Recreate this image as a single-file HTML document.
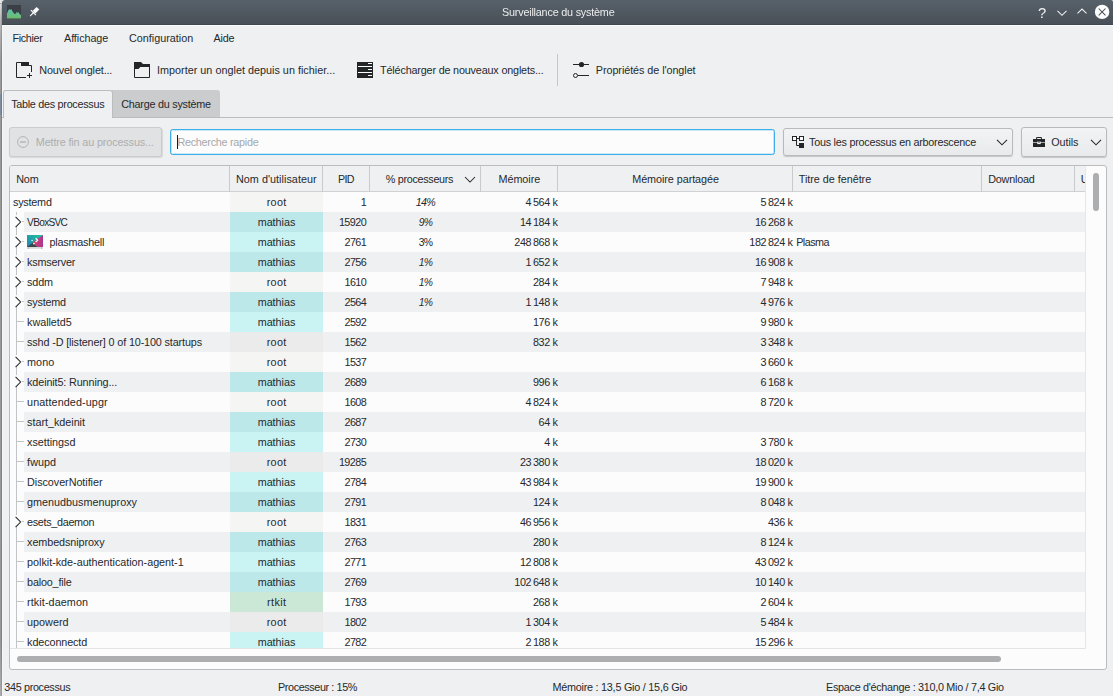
<!DOCTYPE html>
<html lang="fr"><head><meta charset="utf-8"><title>Surveillance du système</title>
<style>
html,body{margin:0;padding:0;}
body{width:1113px;height:696px;overflow:hidden;position:relative;background:#eff0f1;
 font-family:"Liberation Sans",sans-serif;font-size:10.8px;color:#26292c;}
.t{position:absolute;white-space:pre;line-height:14px;height:14px;}
.b{position:absolute;box-sizing:border-box;}
svg{position:absolute;overflow:visible;}
</style></head><body>

<div class="b" style="left:0px;top:0px;width:1px;height:696px;background:linear-gradient(#e6e6e6 0,#e6e6e6 3px,#b0b0b0 3px,#b0b0b0 4px,#dedede 4px,#b8b8b8 20px,#9a9a9a 60px,#989898 640px,#adadad 696px);"></div>
<div class="b" style="left:1px;top:0px;width:1px;height:696px;background:linear-gradient(#e0e0e0 0,#e0e0e0 3px,#a8a8a8 3px,#a8a8a8 4px,#c4c4c4 4px,#a0a0a0 20px,#828282 60px,#808080 640px,#9c9c9c 696px);"></div>
<div class="b" style="left:0px;top:94px;width:1px;height:21px;background:#7d8fa0;"></div>
<div class="b" style="left:1px;top:94px;width:1px;height:21px;background:#6b7b8a;"></div>
<div class="b" style="left:2px;top:25px;width:1px;height:671px;background:#f5f6f7;"></div>
<div class="b" style="left:2px;top:0px;width:1111px;height:24px;background:linear-gradient(#57616a,#495057);border-top-left-radius:3px;border-top-right-radius:2px;"></div>
<div class="b" style="left:2px;top:24px;width:1111px;height:1px;background:#3f4850;"></div>
<div class="b" style="left:3px;top:25px;width:1110px;height:1px;background:#fafbfb;"></div>
<svg style="left:7px;top:5px" width="14" height="14" viewBox="0 0 14 14">
<defs><linearGradient id="ga" x1="0" y1="0" x2="0" y2="1"><stop offset="0" stop-color="#59c2b4"/><stop offset="1" stop-color="#6fbb68"/></linearGradient></defs>
<rect width="14" height="14" fill="#3a4045"/>
<path d="M0 8.4 L1.4 5.2 L2.2 3.9 L3.1 4.9 L4.2 3.9 L5 5.4 L6 7.2 L7.6 8.9 L9 8.5 L9.5 7 L10.3 7.8 L11.3 7 L12.2 8.6 L14 10.2 L14 13.6 L0 13.6 Z" fill="url(#ga)"/>
</svg>
<svg style="left:29px;top:6px" width="11" height="11" viewBox="0 0 11 11">
<g fill="#fcfcfc"><path d="M7.6 0.9 L10.3 3.6 L6.4 7.5 L3.7 4.8 Z"/><path d="M2.3 3.7 L7.3 8.7 L6.5 9.5 L1.5 4.5 Z"/><path d="M4.6 5.6 L5.6 6.6 L1.3 10.4 L0.7 9.8 Z"/></g>
</svg>
<span class="t" style="left:501.65px;top:5.00px;letter-spacing:-0.198px;color:#eceded;will-change:transform;">Surveillance du système</span>
<span class="t" style="left:1038.08px;top:6.00px;color:#f0f0f0;font-size:14.80px;will-change:transform;">?</span>
<svg style="left:1056px;top:7.7px" width="12" height="10" viewBox="0 0 12 10"><path d="M1.5 2.9 L6 7.3 L10.5 2.9" fill="none" stroke="#f0f0f0" stroke-width="1.05"/></svg>
<svg style="left:1076px;top:6.4px" width="12" height="10" viewBox="0 0 12 10"><path d="M1.5 7.4 L6 3 L10.5 7.4" fill="none" stroke="#f0f0f0" stroke-width="1.05"/></svg>
<svg style="left:1094px;top:4.3px" width="16" height="16" viewBox="0 0 16 16"><circle cx="8.1" cy="7.9" r="7.2" fill="#fcfcfc"/><path d="M4.7 4.5 L11.5 11.3 M11.5 4.5 L4.7 11.3" fill="none" stroke="#454d54" stroke-width="1.05"/></svg>
<span class="t" style="left:12.40px;top:31.00px;letter-spacing:-0.318px;">Fichier</span>
<span class="t" style="left:64.00px;top:31.00px;letter-spacing:-0.067px;">Affichage</span>
<span class="t" style="left:129.00px;top:31.00px;">Configuration</span>
<span class="t" style="left:213.60px;top:31.00px;letter-spacing:-0.205px;">Aide</span>
<svg style="left:16px;top:62px" width="16" height="16" viewBox="0 0 16 16">
<path d="M10 15.5 H0.5 V0.5 H12.5 V3.5 H15.5 V10" fill="none" stroke="#232629" stroke-width="1"/>
<rect x="5" y="0" width="8" height="3.6" fill="#232629"/><path d="M5 3.5 H13" stroke="#232629" stroke-width="1" fill="none"/>
<path d="M11 13.5 H16 M13.5 11 V16" stroke="#232629" stroke-width="1" fill="none"/></svg>
<span class="t" style="left:39.30px;top:63.00px;letter-spacing:-0.130px;">Nouvel onglet...</span>
<svg style="left:134px;top:62px" width="16" height="16" viewBox="0 0 16 16">
<path d="M0 0 H7 L9 2 H16 V5 H6.4 L4.4 7 H0 Z" fill="#232629"/>
<path d="M0.5 0 V15.5 H15.5 V2" fill="none" stroke="#232629" stroke-width="1"/></svg>
<span class="t" style="left:157.00px;top:63.00px;letter-spacing:0.016px;">Importer un onglet depuis un fichier...</span>
<svg style="left:357px;top:62px" width="16" height="16" viewBox="0 0 16 16">
<rect width="16" height="16" fill="#232629"/>
<g fill="#fcfcfc"><rect x="1" y="4" width="14" height="1"/><rect x="1" y="10" width="14" height="1"/>
<rect x="11" y="1" width="4" height="1"/><rect x="11" y="7" width="4" height="1"/><rect x="11" y="13" width="4" height="1"/></g></svg>
<span class="t" style="left:380.10px;top:63.00px;letter-spacing:-0.173px;">Télécharger de nouveaux onglets...</span>
<div class="b" style="left:557px;top:54px;width:1px;height:32px;background:#c6c7c8;"></div>
<svg style="left:573px;top:62px" width="16" height="16" viewBox="0 0 16 16">
<path d="M0 2.5 H16 M5 13.5 H16" stroke="#232629" stroke-width="1" fill="none"/>
<circle cx="8.5" cy="2.5" r="2.6" fill="#232629"/><circle cx="2.5" cy="13.5" r="2" fill="#eff0f1" stroke="#232629" stroke-width="1"/></svg>
<span class="t" style="left:595.80px;top:63.00px;letter-spacing:-0.063px;">Propriétés de l'onglet</span>
<div class="b" style="left:2px;top:117px;width:1111px;height:1px;background:#bbbcbd;"></div>
<div class="b" style="left:112px;top:90px;width:108px;height:27px;background:#cbcccd;border-top-right-radius:3px;border-top-left-radius:0;"></div>
<div class="b" style="left:3px;top:90px;width:110px;height:28px;background:#eff0f1;border:1px solid #bbbcbd;border-bottom:none;border-radius:3px 3px 0 0;"></div>
<span class="t" style="left:11.20px;top:97.00px;letter-spacing:-0.281px;">Table des processus</span>
<span class="t" style="left:121.20px;top:97.00px;letter-spacing:-0.234px;">Charge du système</span>
<div class="b" style="left:9px;top:127px;width:153px;height:30px;background:#e1e2e3;border:1px solid #cbcccd;border-radius:3px;box-shadow:0.5px 1px 1px rgba(0,0,0,0.10);"></div>
<svg style="left:17px;top:136px" width="12" height="12" viewBox="0 0 12 12">
<circle cx="6" cy="6" r="5.4" fill="none" stroke="#b2b4b5" stroke-width="1"/><path d="M3 6 H9" stroke="#b2b4b5" stroke-width="1.4"/></svg>
<span class="t" style="left:35.80px;top:135.00px;letter-spacing:-0.130px;color:#acaeaf;">Mettre fin au processus...</span>
<div class="b" style="left:170px;top:129px;width:605px;height:26px;background:#fcfcfc;border:1px solid #3daee9;border-radius:2.5px;box-shadow:inset 0 0 0 0.3px #3daee9;"></div>
<div class="b" style="left:176.8px;top:135px;width:1.4px;height:14px;background:#17191b;"></div>
<span class="t" style="left:177.40px;top:135.00px;letter-spacing:-0.257px;color:#a6a8a9;">Recherche rapide</span>
<div class="b" style="left:783px;top:128px;width:230px;height:28px;background:linear-gradient(#f2f3f4,#e9eaeb);border:1px solid #b9babb;border-radius:3px;box-shadow:0 1px 1px #c4c5c6;"></div>
<svg style="left:792px;top:136px" width="12" height="12" viewBox="0 0 12 12">
<rect x="0.5" y="0.5" width="4" height="4" fill="#fcfcfc" stroke="#232629"/><rect x="7.5" y="0.5" width="4" height="4" fill="#fcfcfc" stroke="#232629"/>
<rect x="7" y="7" width="5" height="5" fill="#232629"/><path d="M5 2.5 H7 M4.5 5 V9.5 H7" fill="none" stroke="#232629"/></svg>
<span class="t" style="left:809.00px;top:135.00px;letter-spacing:-0.245px;">Tous les processus en arborescence</span>
<svg style="left:996px;top:138px" width="12" height="9" viewBox="0 0 12 9"><path d="M1 1.8 L6 6.8 L11 1.8" fill="none" stroke="#232629" stroke-width="1.05"/></svg>
<div class="b" style="left:1021px;top:127px;width:86px;height:30px;background:linear-gradient(#f2f3f4,#e9eaeb);border:1px solid #b9babb;border-radius:3px;box-shadow:0 1px 1px #c4c5c6;"></div>
<svg style="left:1033px;top:137px" width="12" height="10" viewBox="0 0 12 10">
<rect x="0" y="2" width="12" height="8" fill="#232629"/><rect x="0" y="5.2" width="12" height="0.7" fill="#dcdedf"/>
<rect x="4.3" y="4.5" width="3.4" height="2.6" fill="#f6f7f7"/><rect x="5.3" y="4.5" width="1.4" height="1.2" fill="#232629"/>
<path d="M3.6 2 V0.5 H8.4 V2" fill="none" stroke="#232629" stroke-width="1"/></svg>
<span class="t" style="left:1051.20px;top:135.00px;letter-spacing:-0.061px;">Outils</span>
<svg style="left:1090px;top:138px" width="12" height="9" viewBox="0 0 12 9"><path d="M1 1.8 L6 6.8 L11 1.8" fill="none" stroke="#232629" stroke-width="1.05"/></svg>
<div class="b" style="left:9px;top:165px;width:1098px;height:505px;background:#fcfcfc;border:1px solid #bbbcbd;border-radius:3px;"></div>
<div class="b" style="left:10px;top:166px;width:1075px;height:26px;background:#eff0f1;border-bottom:1px solid #d0d1d2;border-top-left-radius:2px;"></div>
<div class="b" style="left:229px;top:166px;width:1px;height:26px;background:#c9cacb;"></div>
<div class="b" style="left:322px;top:166px;width:1px;height:26px;background:#c9cacb;"></div>
<div class="b" style="left:369px;top:166px;width:1px;height:26px;background:#c9cacb;"></div>
<div class="b" style="left:480px;top:166px;width:1px;height:26px;background:#c9cacb;"></div>
<div class="b" style="left:557px;top:166px;width:1px;height:26px;background:#c9cacb;"></div>
<div class="b" style="left:792px;top:166px;width:1px;height:26px;background:#c9cacb;"></div>
<div class="b" style="left:981px;top:166px;width:1px;height:26px;background:#c9cacb;"></div>
<div class="b" style="left:1074px;top:166px;width:1px;height:26px;background:#c9cacb;"></div>
<span class="t" style="left:16.20px;top:172.00px;letter-spacing:-0.151px;">Nom</span>
<span class="t" style="left:236.00px;top:172.00px;letter-spacing:0.032px;">Nom d'utilisateur</span>
<span class="t" style="left:338.10px;top:172.00px;letter-spacing:-0.700px;font-size:10.68px;">PID</span>
<span class="t" style="left:385.80px;top:172.00px;letter-spacing:-0.311px;">% processeurs</span>
<svg style="left:464px;top:175px" width="12" height="9" viewBox="0 0 12 9"><path d="M1 2 L6 7 L11 2" fill="none" stroke="#232629" stroke-width="1.05"/></svg>
<span class="t" style="left:498.50px;top:172.00px;letter-spacing:-0.051px;">Mémoire</span>
<span class="t" style="left:632.20px;top:172.00px;letter-spacing:-0.056px;">Mémoire partagée</span>
<span class="t" style="left:798.80px;top:172.00px;letter-spacing:-0.029px;">Titre de fenêtre</span>
<span class="t" style="left:988.20px;top:172.00px;letter-spacing:-0.190px;">Download</span>
<div class="b" style="left:1075px;top:166px;width:10px;height:24px;overflow:hidden;"><span class="t" style="left:5.8px;top:6.00px;">Upload</span></div>
<div class="b" style="left:10px;top:192px;width:1075px;height:456px;overflow:hidden;">
<div class="b" style="left:220px;top:0px;width:93px;height:20px;background:#f5f5f4;"></div>
<span class="t" style="left:3.00px;top:3.00px;letter-spacing:-0.218px;">systemd</span>
<span class="t" style="left:256.70px;top:3.00px;letter-spacing:0.330px;">root</span>
<span class="t" style="left:350.79px;top:3.00px;">1</span>
<span class="t" style="left:405.84px;top:3.00px;letter-spacing:-0.700px;font-size:10.65px;font-style:italic;">14%</span>
<span class="t" style="right:527.45px;top:3.00px;letter-spacing:-0.346px;word-spacing:-0.954px;">4 564 <span style="margin-left:0.9px">k</span></span>
<span class="t" style="right:292.45px;top:3.00px;letter-spacing:-0.346px;word-spacing:-0.954px;">5 824 <span style="margin-left:0.9px">k</span></span>
<div class="b" style="left:14px;top:20px;width:1061px;height:20px;background:#eff0f1;"></div>
<div class="b" style="left:220px;top:20px;width:93px;height:20px;background:#bde8ea;"></div>
<span class="t" style="left:17.10px;top:23.50px;letter-spacing:-0.700px;font-size:10.14px;">VBoxSVC</span>
<span class="t" style="left:247.70px;top:23.00px;letter-spacing:-0.036px;">mathias</span>
<span class="t" style="left:328.90px;top:23.00px;letter-spacing:-0.533px;">15920</span>
<span class="t" style="left:408.67px;top:23.50px;letter-spacing:-0.700px;font-size:10.35px;font-style:italic;">9%</span>
<span class="t" style="right:527.45px;top:23.00px;letter-spacing:-0.346px;word-spacing:-0.954px;">14 184 <span style="margin-left:0.9px">k</span></span>
<span class="t" style="right:292.45px;top:23.00px;letter-spacing:-0.346px;word-spacing:-0.954px;">16 268 <span style="margin-left:0.9px">k</span></span>
<div class="b" style="left:220px;top:40px;width:93px;height:20px;background:#c9f4f3;"></div>
<span class="t" style="left:39.40px;top:43.00px;letter-spacing:-0.203px;">plasmashell</span>
<span class="t" style="left:247.70px;top:43.00px;letter-spacing:-0.036px;">mathias</span>
<span class="t" style="left:334.56px;top:43.00px;letter-spacing:-0.595px;">2761</span>
<span class="t" style="left:408.67px;top:43.50px;letter-spacing:-0.700px;font-size:10.35px;">3%</span>
<span class="t" style="right:527.45px;top:43.00px;letter-spacing:-0.346px;word-spacing:-0.954px;">248 868 <span style="margin-left:0.9px">k</span></span>
<span class="t" style="right:292.45px;top:43.00px;letter-spacing:-0.346px;word-spacing:-0.954px;">182 824 <span style="margin-left:0.9px">k</span></span>
<span class="t" style="left:786.20px;top:43.00px;letter-spacing:-0.523px;">Plasma</span>
<div class="b" style="left:14px;top:60px;width:1061px;height:20px;background:#eff0f1;"></div>
<div class="b" style="left:220px;top:60px;width:93px;height:20px;background:#bde8ea;"></div>
<span class="t" style="left:17.10px;top:63.00px;letter-spacing:-0.188px;">ksmserver</span>
<span class="t" style="left:247.70px;top:63.00px;letter-spacing:-0.036px;">mathias</span>
<span class="t" style="left:334.56px;top:63.00px;letter-spacing:-0.595px;">2756</span>
<span class="t" style="left:408.67px;top:63.50px;letter-spacing:-0.700px;font-size:10.35px;font-style:italic;">1%</span>
<span class="t" style="right:527.45px;top:63.00px;letter-spacing:-0.346px;word-spacing:-0.954px;">1 652 <span style="margin-left:0.9px">k</span></span>
<span class="t" style="right:292.45px;top:63.00px;letter-spacing:-0.346px;word-spacing:-0.954px;">16 908 <span style="margin-left:0.9px">k</span></span>
<div class="b" style="left:220px;top:80px;width:93px;height:20px;background:#f5f5f4;"></div>
<span class="t" style="left:17.10px;top:83.00px;letter-spacing:-0.137px;">sddm</span>
<span class="t" style="left:256.70px;top:83.00px;letter-spacing:0.330px;">root</span>
<span class="t" style="left:334.56px;top:83.00px;letter-spacing:-0.595px;">1610</span>
<span class="t" style="left:408.67px;top:83.50px;letter-spacing:-0.700px;font-size:10.35px;font-style:italic;">1%</span>
<span class="t" style="right:527.45px;top:83.00px;letter-spacing:-0.346px;word-spacing:-0.954px;">284 <span style="margin-left:0.9px">k</span></span>
<span class="t" style="right:292.45px;top:83.00px;letter-spacing:-0.346px;word-spacing:-0.954px;">7 948 <span style="margin-left:0.9px">k</span></span>
<div class="b" style="left:14px;top:100px;width:1061px;height:20px;background:#eff0f1;"></div>
<div class="b" style="left:220px;top:100px;width:93px;height:20px;background:#bde8ea;"></div>
<span class="t" style="left:17.10px;top:103.00px;letter-spacing:-0.218px;">systemd</span>
<span class="t" style="left:247.70px;top:103.00px;letter-spacing:-0.036px;">mathias</span>
<span class="t" style="left:334.56px;top:103.00px;letter-spacing:-0.595px;">2564</span>
<span class="t" style="left:408.67px;top:103.50px;letter-spacing:-0.700px;font-size:10.35px;font-style:italic;">1%</span>
<span class="t" style="right:527.45px;top:103.00px;letter-spacing:-0.346px;word-spacing:-0.954px;">1 148 <span style="margin-left:0.9px">k</span></span>
<span class="t" style="right:292.45px;top:103.00px;letter-spacing:-0.346px;word-spacing:-0.954px;">4 976 <span style="margin-left:0.9px">k</span></span>
<div class="b" style="left:220px;top:120px;width:93px;height:20px;background:#c9f4f3;"></div>
<span class="t" style="left:17.10px;top:123.00px;letter-spacing:-0.053px;">kwalletd5</span>
<span class="t" style="left:247.70px;top:123.00px;letter-spacing:-0.036px;">mathias</span>
<span class="t" style="left:334.56px;top:123.00px;letter-spacing:-0.595px;">2592</span>
<span class="t" style="right:527.45px;top:123.00px;letter-spacing:-0.346px;word-spacing:-0.954px;">176 <span style="margin-left:0.9px">k</span></span>
<span class="t" style="right:292.45px;top:123.00px;letter-spacing:-0.346px;word-spacing:-0.954px;">9 980 <span style="margin-left:0.9px">k</span></span>
<div class="b" style="left:14px;top:140px;width:1061px;height:20px;background:#eff0f1;"></div>
<div class="b" style="left:220px;top:140px;width:93px;height:20px;background:#ebebeb;"></div>
<span class="t" style="left:17.10px;top:143.00px;letter-spacing:-0.134px;">sshd -D [listener] 0 of 10-100 startups</span>
<span class="t" style="left:256.70px;top:143.00px;letter-spacing:0.330px;">root</span>
<span class="t" style="left:334.56px;top:143.00px;letter-spacing:-0.595px;">1562</span>
<span class="t" style="right:527.45px;top:143.00px;letter-spacing:-0.346px;word-spacing:-0.954px;">832 <span style="margin-left:0.9px">k</span></span>
<span class="t" style="right:292.45px;top:143.00px;letter-spacing:-0.346px;word-spacing:-0.954px;">3 348 <span style="margin-left:0.9px">k</span></span>
<div class="b" style="left:220px;top:160px;width:93px;height:20px;background:#f5f5f4;"></div>
<span class="t" style="left:17.10px;top:163.00px;letter-spacing:0.028px;">mono</span>
<span class="t" style="left:256.70px;top:163.00px;letter-spacing:0.330px;">root</span>
<span class="t" style="left:334.56px;top:163.00px;letter-spacing:-0.595px;">1537</span>
<span class="t" style="right:292.45px;top:163.00px;letter-spacing:-0.346px;word-spacing:-0.954px;">3 660 <span style="margin-left:0.9px">k</span></span>
<div class="b" style="left:14px;top:180px;width:1061px;height:20px;background:#eff0f1;"></div>
<div class="b" style="left:220px;top:180px;width:93px;height:20px;background:#bde8ea;"></div>
<span class="t" style="left:17.10px;top:183.00px;letter-spacing:-0.124px;">kdeinit5: Running...</span>
<span class="t" style="left:247.70px;top:183.00px;letter-spacing:-0.036px;">mathias</span>
<span class="t" style="left:334.56px;top:183.00px;letter-spacing:-0.595px;">2689</span>
<span class="t" style="right:527.45px;top:183.00px;letter-spacing:-0.346px;word-spacing:-0.954px;">996 <span style="margin-left:0.9px">k</span></span>
<span class="t" style="right:292.45px;top:183.00px;letter-spacing:-0.346px;word-spacing:-0.954px;">6 168 <span style="margin-left:0.9px">k</span></span>
<div class="b" style="left:220px;top:200px;width:93px;height:20px;background:#f5f5f4;"></div>
<span class="t" style="left:17.10px;top:203.00px;letter-spacing:0.088px;">unattended-upgr</span>
<span class="t" style="left:256.70px;top:203.00px;letter-spacing:0.330px;">root</span>
<span class="t" style="left:334.56px;top:203.00px;letter-spacing:-0.595px;">1608</span>
<span class="t" style="right:527.45px;top:203.00px;letter-spacing:-0.346px;word-spacing:-0.954px;">4 824 <span style="margin-left:0.9px">k</span></span>
<span class="t" style="right:292.45px;top:203.00px;letter-spacing:-0.346px;word-spacing:-0.954px;">8 720 <span style="margin-left:0.9px">k</span></span>
<div class="b" style="left:14px;top:220px;width:1061px;height:20px;background:#eff0f1;"></div>
<div class="b" style="left:220px;top:220px;width:93px;height:20px;background:#bde8ea;"></div>
<span class="t" style="left:17.10px;top:223.00px;letter-spacing:-0.027px;">start_kdeinit</span>
<span class="t" style="left:247.70px;top:223.00px;letter-spacing:-0.036px;">mathias</span>
<span class="t" style="left:334.56px;top:223.00px;letter-spacing:-0.595px;">2687</span>
<span class="t" style="right:527.45px;top:223.00px;letter-spacing:-0.346px;word-spacing:-0.954px;">64 <span style="margin-left:0.9px">k</span></span>
<div class="b" style="left:220px;top:240px;width:93px;height:20px;background:#c9f4f3;"></div>
<span class="t" style="left:17.10px;top:243.00px;letter-spacing:-0.036px;">xsettingsd</span>
<span class="t" style="left:247.70px;top:243.00px;letter-spacing:-0.036px;">mathias</span>
<span class="t" style="left:334.56px;top:243.00px;letter-spacing:-0.595px;">2730</span>
<span class="t" style="right:527.45px;top:243.00px;letter-spacing:-0.346px;word-spacing:-0.954px;">4 <span style="margin-left:0.9px">k</span></span>
<span class="t" style="right:292.45px;top:243.00px;letter-spacing:-0.346px;word-spacing:-0.954px;">3 780 <span style="margin-left:0.9px">k</span></span>
<div class="b" style="left:14px;top:260px;width:1061px;height:20px;background:#eff0f1;"></div>
<div class="b" style="left:220px;top:260px;width:93px;height:20px;background:#ebebeb;"></div>
<span class="t" style="left:17.10px;top:263.00px;letter-spacing:0.045px;">fwupd</span>
<span class="t" style="left:256.70px;top:263.00px;letter-spacing:0.330px;">root</span>
<span class="t" style="left:328.90px;top:263.00px;letter-spacing:-0.533px;">19285</span>
<span class="t" style="right:527.45px;top:263.00px;letter-spacing:-0.346px;word-spacing:-0.954px;">23 380 <span style="margin-left:0.9px">k</span></span>
<span class="t" style="right:292.45px;top:263.00px;letter-spacing:-0.346px;word-spacing:-0.954px;">18 020 <span style="margin-left:0.9px">k</span></span>
<div class="b" style="left:220px;top:280px;width:93px;height:20px;background:#c9f4f3;"></div>
<span class="t" style="left:17.10px;top:283.00px;letter-spacing:-0.054px;">DiscoverNotifier</span>
<span class="t" style="left:247.70px;top:283.00px;letter-spacing:-0.036px;">mathias</span>
<span class="t" style="left:334.56px;top:283.00px;letter-spacing:-0.595px;">2784</span>
<span class="t" style="right:527.45px;top:283.00px;letter-spacing:-0.346px;word-spacing:-0.954px;">43 984 <span style="margin-left:0.9px">k</span></span>
<span class="t" style="right:292.45px;top:283.00px;letter-spacing:-0.346px;word-spacing:-0.954px;">19 900 <span style="margin-left:0.9px">k</span></span>
<div class="b" style="left:14px;top:300px;width:1061px;height:20px;background:#eff0f1;"></div>
<div class="b" style="left:220px;top:300px;width:93px;height:20px;background:#bde8ea;"></div>
<span class="t" style="left:17.10px;top:303.00px;">gmenudbusmenuproxy</span>
<span class="t" style="left:247.70px;top:303.00px;letter-spacing:-0.036px;">mathias</span>
<span class="t" style="left:334.56px;top:303.00px;letter-spacing:-0.595px;">2791</span>
<span class="t" style="right:527.45px;top:303.00px;letter-spacing:-0.346px;word-spacing:-0.954px;">124 <span style="margin-left:0.9px">k</span></span>
<span class="t" style="right:292.45px;top:303.00px;letter-spacing:-0.346px;word-spacing:-0.954px;">8 048 <span style="margin-left:0.9px">k</span></span>
<div class="b" style="left:220px;top:320px;width:93px;height:20px;background:#f5f5f4;"></div>
<span class="t" style="left:17.10px;top:323.00px;letter-spacing:-0.314px;">esets_daemon</span>
<span class="t" style="left:256.70px;top:323.00px;letter-spacing:0.330px;">root</span>
<span class="t" style="left:334.56px;top:323.00px;letter-spacing:-0.595px;">1831</span>
<span class="t" style="right:527.45px;top:323.00px;letter-spacing:-0.346px;word-spacing:-0.954px;">46 956 <span style="margin-left:0.9px">k</span></span>
<span class="t" style="right:292.45px;top:323.00px;letter-spacing:-0.346px;word-spacing:-0.954px;">436 <span style="margin-left:0.9px">k</span></span>
<div class="b" style="left:14px;top:340px;width:1061px;height:20px;background:#eff0f1;"></div>
<div class="b" style="left:220px;top:340px;width:93px;height:20px;background:#bde8ea;"></div>
<span class="t" style="left:17.10px;top:343.00px;letter-spacing:-0.088px;">xembedsniproxy</span>
<span class="t" style="left:247.70px;top:343.00px;letter-spacing:-0.036px;">mathias</span>
<span class="t" style="left:334.56px;top:343.00px;letter-spacing:-0.595px;">2763</span>
<span class="t" style="right:527.45px;top:343.00px;letter-spacing:-0.346px;word-spacing:-0.954px;">280 <span style="margin-left:0.9px">k</span></span>
<span class="t" style="right:292.45px;top:343.00px;letter-spacing:-0.346px;word-spacing:-0.954px;">8 124 <span style="margin-left:0.9px">k</span></span>
<div class="b" style="left:220px;top:360px;width:93px;height:20px;background:#c9f4f3;"></div>
<span class="t" style="left:17.10px;top:363.00px;letter-spacing:-0.022px;">polkit-kde-authentication-agent-1</span>
<span class="t" style="left:247.70px;top:363.00px;letter-spacing:-0.036px;">mathias</span>
<span class="t" style="left:334.56px;top:363.00px;letter-spacing:-0.595px;">2771</span>
<span class="t" style="right:527.45px;top:363.00px;letter-spacing:-0.346px;word-spacing:-0.954px;">12 808 <span style="margin-left:0.9px">k</span></span>
<span class="t" style="right:292.45px;top:363.00px;letter-spacing:-0.346px;word-spacing:-0.954px;">43 092 <span style="margin-left:0.9px">k</span></span>
<div class="b" style="left:14px;top:380px;width:1061px;height:20px;background:#eff0f1;"></div>
<div class="b" style="left:220px;top:380px;width:93px;height:20px;background:#bde8ea;"></div>
<span class="t" style="left:17.10px;top:383.00px;letter-spacing:-0.182px;">baloo_file</span>
<span class="t" style="left:247.70px;top:383.00px;letter-spacing:-0.036px;">mathias</span>
<span class="t" style="left:334.56px;top:383.00px;letter-spacing:-0.595px;">2769</span>
<span class="t" style="right:527.45px;top:383.00px;letter-spacing:-0.346px;word-spacing:-0.954px;">102 648 <span style="margin-left:0.9px">k</span></span>
<span class="t" style="right:292.45px;top:383.00px;letter-spacing:-0.346px;word-spacing:-0.954px;">10 140 <span style="margin-left:0.9px">k</span></span>
<div class="b" style="left:220px;top:400px;width:93px;height:20px;background:#cbe8d6;"></div>
<span class="t" style="left:17.10px;top:403.00px;letter-spacing:0.080px;">rtkit-daemon</span>
<span class="t" style="left:257.00px;top:403.00px;letter-spacing:0.401px;">rtkit</span>
<span class="t" style="left:334.56px;top:403.00px;letter-spacing:-0.595px;">1793</span>
<span class="t" style="right:527.45px;top:403.00px;letter-spacing:-0.346px;word-spacing:-0.954px;">268 <span style="margin-left:0.9px">k</span></span>
<span class="t" style="right:292.45px;top:403.00px;letter-spacing:-0.346px;word-spacing:-0.954px;">2 604 <span style="margin-left:0.9px">k</span></span>
<div class="b" style="left:14px;top:420px;width:1061px;height:20px;background:#eff0f1;"></div>
<div class="b" style="left:220px;top:420px;width:93px;height:20px;background:#ebebeb;"></div>
<span class="t" style="left:17.10px;top:423.00px;">upowerd</span>
<span class="t" style="left:256.70px;top:423.00px;letter-spacing:0.330px;">root</span>
<span class="t" style="left:334.56px;top:423.00px;letter-spacing:-0.595px;">1802</span>
<span class="t" style="right:527.45px;top:423.00px;letter-spacing:-0.346px;word-spacing:-0.954px;">1 304 <span style="margin-left:0.9px">k</span></span>
<span class="t" style="right:292.45px;top:423.00px;letter-spacing:-0.346px;word-spacing:-0.954px;">5 484 <span style="margin-left:0.9px">k</span></span>
<div class="b" style="left:220px;top:440px;width:93px;height:20px;background:#c9f4f3;"></div>
<span class="t" style="left:17.10px;top:443.00px;letter-spacing:-0.105px;">kdeconnectd</span>
<span class="t" style="left:247.70px;top:443.00px;letter-spacing:-0.036px;">mathias</span>
<span class="t" style="left:334.56px;top:443.00px;letter-spacing:-0.595px;">2782</span>
<span class="t" style="right:527.45px;top:443.00px;letter-spacing:-0.346px;word-spacing:-0.954px;">2 188 <span style="margin-left:0.9px">k</span></span>
<span class="t" style="right:292.45px;top:443.00px;letter-spacing:-0.346px;word-spacing:-0.954px;">15 296 <span style="margin-left:0.9px">k</span></span>
<div class="b" style="left:6px;top:20px;width:1px;height:440px;background:#c3c4c5;"></div>
<div class="b" style="left:4px;top:23px;width:6px;height:12px;background:#fcfcfc;"></div>
<svg style="left:4.5px;top:23.7px" width="8" height="12" viewBox="0 0 8 12"><path d="M0.6 0.8 L5.6 6 L0.6 11.2" fill="none" stroke="#232629" stroke-width="1.05"/></svg>
<div class="b" style="left:12px;top:29px;width:2px;height:1px;background:#c3c4c5;"></div>
<div class="b" style="left:4px;top:43px;width:6px;height:12px;background:#fcfcfc;"></div>
<svg style="left:4.5px;top:43.7px" width="8" height="12" viewBox="0 0 8 12"><path d="M0.6 0.8 L5.6 6 L0.6 11.2" fill="none" stroke="#232629" stroke-width="1.05"/></svg>
<div class="b" style="left:12px;top:49px;width:2px;height:1px;background:#c3c4c5;"></div>
<div class="b" style="left:4px;top:63px;width:6px;height:12px;background:#fcfcfc;"></div>
<svg style="left:4.5px;top:63.7px" width="8" height="12" viewBox="0 0 8 12"><path d="M0.6 0.8 L5.6 6 L0.6 11.2" fill="none" stroke="#232629" stroke-width="1.05"/></svg>
<div class="b" style="left:12px;top:69px;width:2px;height:1px;background:#c3c4c5;"></div>
<div class="b" style="left:4px;top:83px;width:6px;height:12px;background:#fcfcfc;"></div>
<svg style="left:4.5px;top:83.7px" width="8" height="12" viewBox="0 0 8 12"><path d="M0.6 0.8 L5.6 6 L0.6 11.2" fill="none" stroke="#232629" stroke-width="1.05"/></svg>
<div class="b" style="left:12px;top:89px;width:2px;height:1px;background:#c3c4c5;"></div>
<div class="b" style="left:4px;top:103px;width:6px;height:12px;background:#fcfcfc;"></div>
<svg style="left:4.5px;top:103.7px" width="8" height="12" viewBox="0 0 8 12"><path d="M0.6 0.8 L5.6 6 L0.6 11.2" fill="none" stroke="#232629" stroke-width="1.05"/></svg>
<div class="b" style="left:12px;top:109px;width:2px;height:1px;background:#c3c4c5;"></div>
<div class="b" style="left:7px;top:129px;width:7px;height:1px;background:#c3c4c5;"></div>
<div class="b" style="left:7px;top:149px;width:7px;height:1px;background:#c3c4c5;"></div>
<div class="b" style="left:4px;top:163px;width:6px;height:12px;background:#fcfcfc;"></div>
<svg style="left:4.5px;top:163.7px" width="8" height="12" viewBox="0 0 8 12"><path d="M0.6 0.8 L5.6 6 L0.6 11.2" fill="none" stroke="#232629" stroke-width="1.05"/></svg>
<div class="b" style="left:12px;top:169px;width:2px;height:1px;background:#c3c4c5;"></div>
<div class="b" style="left:4px;top:183px;width:6px;height:12px;background:#fcfcfc;"></div>
<svg style="left:4.5px;top:183.7px" width="8" height="12" viewBox="0 0 8 12"><path d="M0.6 0.8 L5.6 6 L0.6 11.2" fill="none" stroke="#232629" stroke-width="1.05"/></svg>
<div class="b" style="left:12px;top:189px;width:2px;height:1px;background:#c3c4c5;"></div>
<div class="b" style="left:7px;top:209px;width:7px;height:1px;background:#c3c4c5;"></div>
<div class="b" style="left:7px;top:229px;width:7px;height:1px;background:#c3c4c5;"></div>
<div class="b" style="left:7px;top:249px;width:7px;height:1px;background:#c3c4c5;"></div>
<div class="b" style="left:7px;top:269px;width:7px;height:1px;background:#c3c4c5;"></div>
<div class="b" style="left:7px;top:289px;width:7px;height:1px;background:#c3c4c5;"></div>
<div class="b" style="left:7px;top:309px;width:7px;height:1px;background:#c3c4c5;"></div>
<div class="b" style="left:4px;top:323px;width:6px;height:12px;background:#fcfcfc;"></div>
<svg style="left:4.5px;top:323.7px" width="8" height="12" viewBox="0 0 8 12"><path d="M0.6 0.8 L5.6 6 L0.6 11.2" fill="none" stroke="#232629" stroke-width="1.05"/></svg>
<div class="b" style="left:12px;top:329px;width:2px;height:1px;background:#c3c4c5;"></div>
<div class="b" style="left:7px;top:349px;width:7px;height:1px;background:#c3c4c5;"></div>
<div class="b" style="left:7px;top:369px;width:7px;height:1px;background:#c3c4c5;"></div>
<div class="b" style="left:7px;top:389px;width:7px;height:1px;background:#c3c4c5;"></div>
<div class="b" style="left:7px;top:409px;width:7px;height:1px;background:#c3c4c5;"></div>
<div class="b" style="left:7px;top:429px;width:7px;height:1px;background:#c3c4c5;"></div>
<div class="b" style="left:7px;top:449px;width:7px;height:1px;background:#c3c4c5;"></div>
<svg style="left:17px;top:43px" width="16" height="14" viewBox="0 0 16 14">
<defs><linearGradient id="gp1" x1="0" y1="1" x2="1" y2="0"><stop offset="0" stop-color="#1c84bd"/><stop offset="0.5" stop-color="#22a3a6"/><stop offset="1" stop-color="#1fc79a"/></linearGradient>
<linearGradient id="gp2" x1="0" y1="0" x2="1" y2="0"><stop offset="0" stop-color="#e0405a"/><stop offset="1" stop-color="#a8359a"/></linearGradient></defs>
<rect x="0" y="0" width="16" height="12" fill="url(#gp1)"/>
<path d="M16 0 V12 H10 L6 7.5 Z" fill="url(#gp2)"/>
<path d="M0 12 L6 7.5 L10 12 Z" fill="#3c4649"/>
<rect x="0.4" y="12" width="15.2" height="1.8" fill="#d6d9d9"/><rect x="0.6" y="12.6" width="1.2" height="1" fill="#8d9496"/><rect x="14" y="12.6" width="1.4" height="1" fill="#b8a0b4"/>
<path d="M8.6 3.3 L10.6 5.2 L8.6 7.1" fill="none" stroke="#fbfbfb" stroke-width="1.3"/><circle cx="5.1" cy="5.6" r="0.75" fill="#e8f6f6"/><circle cx="6.9" cy="8.6" r="0.9" fill="#fbfbfb"/>
</svg>
</div>
<div class="b" style="left:10px;top:648px;width:1076px;height:1px;background:#e3e4e5;"></div>
<div class="b" style="left:1085px;top:166px;width:1px;height:483px;background:#e6e7e8;"></div>
<div class="b" style="left:1093px;top:173px;width:6px;height:38px;background:#adaeaf;border-radius:3px;"></div>
<div class="b" style="left:17px;top:656px;width:984px;height:6px;background:#adaeaf;border-radius:3px;"></div>
<span class="t" style="left:4.30px;top:680.00px;letter-spacing:-0.329px;">345 processus</span>
<span class="t" style="left:278.00px;top:680.00px;letter-spacing:-0.389px;">Processeur : 15%</span>
<span class="t" style="left:552.40px;top:680.00px;letter-spacing:-0.231px;">Mémoire : 13,5 Gio / 15,6 Gio</span>
<span class="t" style="left:826.10px;top:680.00px;letter-spacing:-0.291px;">Espace d'échange : 310,0 Mio / 7,4 Gio</span>
</body></html>
